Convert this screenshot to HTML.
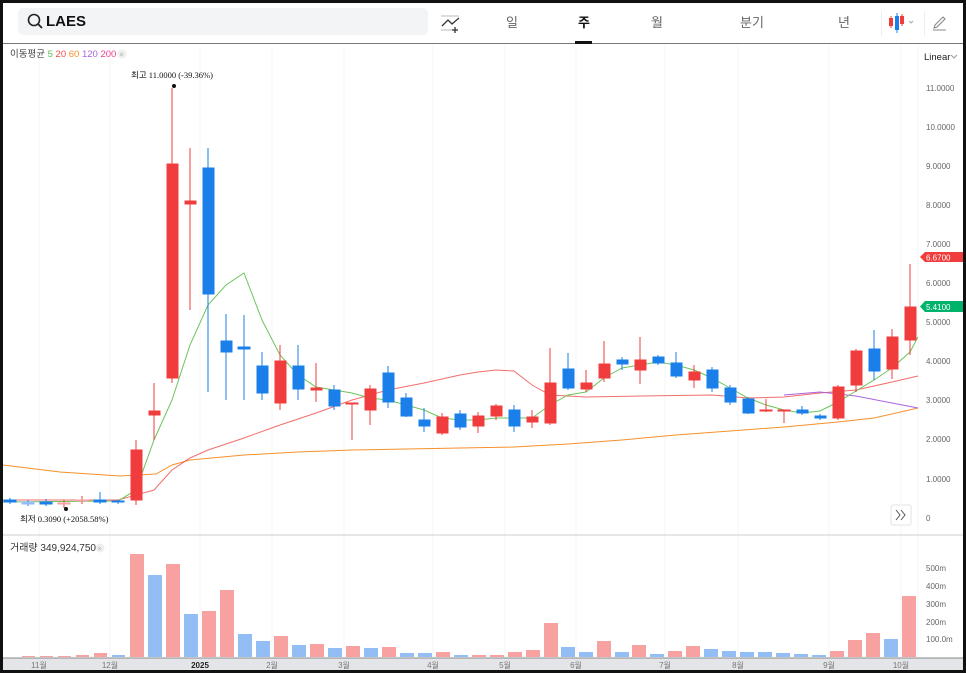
<!DOCTYPE html>
<html><head><meta charset="utf-8">
<style>
*{margin:0;padding:0;box-sizing:border-box}
html,body{width:966px;height:673px;overflow:hidden;background:#111}
body{font-family:"Liberation Sans","Noto Sans CJK KR",sans-serif;position:relative}
#page{position:absolute;left:3px;top:3px;width:960px;height:667px;background:#fff;overflow:hidden}
.top{position:absolute;left:0;top:0;width:960px;height:41px;border-bottom:1px solid #777}
.search{position:absolute;left:15px;top:5px;width:410px;height:27px;background:#f3f4f6;border-radius:5px}
.search span{position:absolute;left:28px;top:5px;font-weight:bold;font-size:15px;color:#111}
.tab{position:absolute;top:9px;font-size:13px;color:#666}
.sel{color:#111;font-weight:bold}
.t{font-family:"Liberation Sans","Noto Sans CJK KR",sans-serif}
</style></head><body><div id="page">
<div class="top">
 <div class="search"><svg width="20" height="20" style="position:absolute;left:8px;top:4px"><circle cx="8" cy="8" r="5.5" fill="none" stroke="#222" stroke-width="1.6"/><line x1="12" y1="12" x2="16" y2="16" stroke="#222" stroke-width="1.8"/></svg><span>LAES</span></div>
 <svg width="24" height="20" style="position:absolute;left:438px;top:11px"><line x1="0" y1="2" x2="18" y2="2" stroke="#bbb"/><polyline points="1,12 7,6 11,10 18,4" fill="none" stroke="#333" stroke-width="1.3"/><line x1="0" y1="16" x2="14" y2="16" stroke="#bbb"/><line x1="14" y1="13" x2="14" y2="19" stroke="#333" stroke-width="1.3"/><line x1="11" y1="16" x2="17" y2="16" stroke="#333" stroke-width="1.3"/></svg>
 <div class="tab" style="left:503px">일</div>
 <div class="tab sel" style="left:575px">주</div>
 <div class="tab" style="left:648px">월</div>
 <div class="tab" style="left:737px">분기</div>
 <div class="tab" style="left:835px">년</div>
 <div style="position:absolute;left:572px;top:38px;width:17px;height:3px;background:#111"></div>
 <div style="position:absolute;left:878px;top:8px;width:1px;height:25px;background:#eee"></div>
 <svg width="30" height="22" style="position:absolute;left:885px;top:9px"><line x1="3" y1="4" x2="3" y2="16" stroke="#f03c3c"/><rect x="1" y="6" width="4" height="8" fill="#f03c3c"/><line x1="9" y1="1" x2="9" y2="21" stroke="#1a7fe8"/><rect x="7" y="4" width="4" height="14" fill="#1a7fe8"/><line x1="14" y1="2" x2="14" y2="14" stroke="#f03c3c"/><rect x="12" y="4" width="4" height="8" fill="#f03c3c"/><polyline points="21,9 23,11 25,9" fill="none" stroke="#aaa"/></svg>
 <div style="position:absolute;left:921px;top:8px;width:1px;height:25px;background:#eee"></div>
 <svg width="16" height="16" style="position:absolute;left:929px;top:12px"><path d="M2 13 L3 10 L11 2 L13 4 L5 12 Z" fill="none" stroke="#888" stroke-width="1.1"/><line x1="1" y1="15" x2="14" y2="15" stroke="#888"/></svg>
</div>
<svg width="960" height="667" viewBox="3 3 960 667" style="position:absolute;left:0;top:0">
<g stroke="#f6f6f6" stroke-width="1">
<line x1="39" y1="45" x2="39" y2="657"/><line x1="110" y1="45" x2="110" y2="657"/><line x1="200" y1="45" x2="200" y2="657"/><line x1="272" y1="45" x2="272" y2="657"/><line x1="344" y1="45" x2="344" y2="657"/><line x1="433" y1="45" x2="433" y2="657"/><line x1="505" y1="45" x2="505" y2="657"/><line x1="576" y1="45" x2="576" y2="657"/><line x1="665" y1="45" x2="665" y2="657"/><line x1="738" y1="45" x2="738" y2="657"/><line x1="829" y1="45" x2="829" y2="657"/><line x1="901" y1="45" x2="901" y2="657"/>
<line x1="918" y1="45" x2="918" y2="657"/>
</g>
<line x1="3" y1="535" x2="963" y2="535" stroke="#ccc"/>
<text x="10" y="57" font-size="9.5" fill="#444" class="t">이동평균 <tspan fill="#5fbf4a">5</tspan> <tspan fill="#f04848">20</tspan> <tspan fill="#f5912b">60</tspan> <tspan fill="#a964e0">120</tspan> <tspan fill="#ee3e8a">200</tspan></text>
<circle cx="122" cy="54" r="4.5" fill="#eee"/><text x="119.5" y="57" font-size="7" fill="#aaa">×</text>
<text x="924" y="60" font-size="9.5" fill="#222" class="t">Linear</text><polyline points="951,55 954,58 957,55" fill="none" stroke="#999"/>
<g font-size="8" fill="#666" class="t">
<text x="926" y="91">11.0000</text><text x="926" y="130">10.0000</text><text x="926" y="169">9.0000</text><text x="926" y="208">8.0000</text><text x="926" y="247">7.0000</text><text x="926" y="286">6.0000</text><text x="926" y="325">5.0000</text><text x="926" y="364">4.0000</text><text x="926" y="403">3.0000</text><text x="926" y="442">2.0000</text><text x="926" y="482">1.0000</text><text x="926" y="521">0</text>
</g>
<path d="M925 252 H963 V262 H925 L920 257 Z" fill="#f03c3c"/><text x="926" y="260.5" font-size="8" fill="#fff">6.6700</text>
<path d="M925 301 H963 V312 H925 L920 306.5 Z" fill="#00b36b"/><text x="926" y="310" font-size="8" fill="#fff">5.4100</text>
<polyline fill="none" stroke="#f5912b" stroke-width="1" points="3,465 60,472 120,476 156,474 172,465 190,460 244,455 298,452 352,450 406,449 460,448 514,447 568,444 622,440 676,435 730,431 784,427 838,422 874,418 918,408"/>
<polyline fill="none" stroke="#f04848" stroke-width="1" opacity=".8" points="3,500 118,500 154,490 172,470 190,458 208,450 244,438 280,425 316,413 352,400 388,390 424,383 460,375 478,372 496,370 514,371 532,385 550,395 586,397 640,396 712,395 748,398 784,397 820,393 856,390 892,382 918,376"/>
<polyline fill="none" stroke="#a964e0" stroke-width="1" points="784,395 820,392 856,396 892,403 918,408"/>
<polyline fill="none" stroke="#6cc45a" stroke-width="1" points="3,502 118,501 136,490 154,440 172,400 190,345 208,305 226,285 244,273 262,320 280,355 298,375 316,387 334,390 352,393 370,398 388,400 406,405 424,410 442,418 460,420 478,420 496,418 514,418 532,418 550,405 568,395 586,392 604,378 622,368 640,365 658,362 676,365 694,370 712,378 730,388 748,398 766,405 784,410 802,413 820,411 838,402 856,391 874,380 892,368 910,352 918,337"/>
<g stroke-width="1">
<g stroke="#1a7fe8" fill="#1a7fe8">
<line x1="10" y1="498" x2="10" y2="504"/><rect x="4" y="500" width="12" height="2"/>
<line x1="28" y1="500" x2="28" y2="506"/><rect x="22" y="502" width="12" height="2" fill="#93bdf5" stroke="#93bdf5"/>
<line x1="46" y1="499" x2="46" y2="506"/><rect x="40" y="502" width="12" height="2"/>
<line x1="100" y1="492" x2="100" y2="504"/><rect x="94" y="500" width="12" height="2"/>
<line x1="118" y1="500" x2="118" y2="504"/><rect x="112" y="501" width="12" height="1"/>
<line x1="208" y1="148" x2="208" y2="392"/><rect x="203" y="168" width="11" height="126"/>
<line x1="226" y1="314" x2="226" y2="400"/><rect x="221" y="341" width="11" height="11"/>
<line x1="244" y1="315" x2="244" y2="400"/><rect x="238" y="347" width="12" height="2"/>
<line x1="262" y1="352" x2="262" y2="400"/><rect x="257" y="366" width="11" height="27"/>
<line x1="298" y1="345" x2="298" y2="400"/><rect x="293" y="366" width="11" height="23"/>
<line x1="334" y1="385" x2="334" y2="410"/><rect x="329" y="390" width="11" height="16"/>
<line x1="388" y1="366" x2="388" y2="408"/><rect x="383" y="373" width="11" height="29"/>
<line x1="406" y1="393" x2="406" y2="417"/><rect x="401" y="398" width="11" height="18"/>
<line x1="424" y1="408" x2="424" y2="432"/><rect x="419" y="420" width="11" height="6"/>
<line x1="460" y1="410" x2="460" y2="430"/><rect x="455" y="414" width="11" height="13"/>
<line x1="514" y1="405" x2="514" y2="432"/><rect x="509" y="410" width="11" height="16"/>
<line x1="568" y1="353" x2="568" y2="390"/><rect x="563" y="369" width="11" height="19"/>
<line x1="622" y1="357" x2="622" y2="370"/><rect x="617" y="360" width="11" height="4"/>
<line x1="658" y1="355" x2="658" y2="365"/><rect x="653" y="357" width="11" height="6"/>
<line x1="676" y1="352" x2="676" y2="378"/><rect x="671" y="363" width="11" height="13"/>
<line x1="712" y1="367" x2="712" y2="392"/><rect x="707" y="370" width="11" height="18"/>
<line x1="730" y1="385" x2="730" y2="405"/><rect x="725" y="388" width="11" height="14"/>
<line x1="748" y1="397" x2="748" y2="414"/><rect x="743" y="399" width="11" height="14"/>
<line x1="802" y1="406" x2="802" y2="415"/><rect x="797" y="410" width="11" height="3"/>
<line x1="820" y1="414" x2="820" y2="420"/><rect x="815" y="416" width="11" height="2"/>
<line x1="874" y1="330" x2="874" y2="380"/><rect x="869" y="349" width="11" height="22"/>
</g>
<g stroke="#f03c3c" fill="#f03c3c">
<line x1="64" y1="500" x2="64" y2="508"/><rect x="58" y="503" width="12" height="1" fill="#f7a1a1" stroke="#f7a1a1"/>
<line x1="82" y1="496" x2="82" y2="504"/><rect x="76" y="500" width="12" height="1" fill="#f7a1a1" stroke="#f7a1a1"/>
<line x1="136" y1="440" x2="136" y2="505"/><rect x="131" y="450" width="11" height="50"/>
<line x1="154" y1="383" x2="154" y2="440"/><rect x="149" y="411" width="11" height="4"/>
<line x1="172" y1="88" x2="172" y2="383"/><rect x="167" y="164" width="11" height="214"/>
<line x1="190" y1="148" x2="190" y2="310"/><rect x="185" y="201" width="11" height="3"/>
<line x1="280" y1="345" x2="280" y2="410"/><rect x="275" y="361" width="11" height="42"/>
<line x1="316" y1="363" x2="316" y2="402"/><rect x="311" y="388" width="11" height="2"/>
<line x1="352" y1="403" x2="352" y2="440"/><rect x="346" y="403" width="12" height="1"/>
<line x1="370" y1="385" x2="370" y2="425"/><rect x="365" y="389" width="11" height="21"/>
<line x1="442" y1="413" x2="442" y2="435"/><rect x="437" y="417" width="11" height="16"/>
<line x1="478" y1="412" x2="478" y2="433"/><rect x="473" y="416" width="11" height="10"/>
<line x1="496" y1="404" x2="496" y2="420"/><rect x="491" y="406" width="11" height="10"/>
<line x1="532" y1="410" x2="532" y2="428"/><rect x="527" y="417" width="11" height="5"/>
<line x1="550" y1="348" x2="550" y2="425"/><rect x="545" y="383" width="11" height="40"/>
<line x1="586" y1="370" x2="586" y2="392"/><rect x="581" y="383" width="11" height="6"/>
<line x1="604" y1="341" x2="604" y2="382"/><rect x="599" y="364" width="11" height="14"/>
<line x1="640" y1="337" x2="640" y2="384"/><rect x="635" y="360" width="11" height="10"/>
<line x1="694" y1="365" x2="694" y2="388"/><rect x="689" y="372" width="11" height="8"/>
<line x1="766" y1="399" x2="766" y2="412"/><rect x="760" y="410" width="12" height="1"/>
<line x1="784" y1="410" x2="784" y2="423"/><rect x="778" y="410" width="12" height="1"/>
<line x1="838" y1="385" x2="838" y2="420"/><rect x="833" y="387" width="11" height="31"/>
<line x1="856" y1="349" x2="856" y2="392"/><rect x="851" y="351" width="11" height="34"/>
<line x1="892" y1="329" x2="892" y2="379"/><rect x="887" y="337" width="11" height="32"/>
<line x1="910" y1="264" x2="910" y2="355"/><rect x="905" y="307" width="11" height="33"/>
</g>
</g>
<circle cx="174" cy="86" r="2" fill="#111"/>
<text x="131" y="78" font-size="8.5" fill="#111" font-family="Liberation Serif,'Noto Sans CJK KR',serif">최고  11.0000 (-39.36%)</text>
<circle cx="66" cy="509" r="2" fill="#111"/>
<text x="20" y="522" font-size="8.5" fill="#111" font-family="Liberation Serif,'Noto Sans CJK KR',serif">최저  0.3090 (+2058.58%)</text>
<rect x="891" y="505" width="20" height="20" rx="2" fill="#fff" stroke="#e3e3e3"/>
<polyline points="896,510 900,515 896,520" fill="none" stroke="#555"/><polyline points="901,510 905,515 901,520" fill="none" stroke="#555"/>
<text x="10" y="551" font-size="10" fill="#333" class="t">거래량 349,924,750</text>
<circle cx="100" cy="548" r="4.5" fill="#eee"/><text x="97.5" y="551" font-size="7" fill="#aaa">×</text>
<g font-size="8" fill="#666" class="t"><text x="926" y="571">500m</text><text x="926" y="589">400m</text><text x="926" y="607">300m</text><text x="926" y="625">200m</text><text x="926" y="642">100.0m</text></g>
<g fill="#f7a1a1">
<rect x="22" y="656" width="13" height="1"/><rect x="40" y="656" width="13" height="1"/><rect x="58" y="656" width="13" height="1"/><rect x="76" y="655" width="13" height="2"/><rect x="94" y="653" width="13" height="4"/>
<rect x="130" y="554" width="14" height="103"/><rect x="166" y="564" width="14" height="93"/><rect x="202" y="611" width="14" height="46"/><rect x="220" y="590" width="14" height="67"/><rect x="274" y="636" width="14" height="21"/><rect x="310" y="644" width="14" height="13"/><rect x="346" y="646" width="14" height="11"/><rect x="382" y="647" width="14" height="10"/><rect x="436" y="652" width="14" height="5"/><rect x="472" y="655" width="14" height="2"/><rect x="490" y="655" width="14" height="2"/><rect x="508" y="652" width="14" height="5"/><rect x="526" y="650" width="14" height="7"/><rect x="544" y="623" width="14" height="34"/><rect x="597" y="641" width="14" height="16"/><rect x="632" y="645" width="14" height="12"/><rect x="668" y="651" width="14" height="6"/><rect x="686" y="646" width="14" height="11"/><rect x="830" y="651" width="14" height="6"/><rect x="848" y="640" width="14" height="17"/><rect x="866" y="633" width="14" height="24"/><rect x="902" y="596" width="14" height="61"/>
</g>
<g fill="#93bdf5">
<rect x="112" y="655" width="13" height="2"/><rect x="148" y="575" width="14" height="82"/><rect x="184" y="614" width="14" height="43"/><rect x="238" y="634" width="14" height="23"/><rect x="256" y="641" width="14" height="16"/><rect x="292" y="645" width="14" height="12"/><rect x="328" y="648" width="14" height="9"/><rect x="364" y="648" width="14" height="9"/><rect x="400" y="653" width="14" height="4"/><rect x="418" y="653" width="14" height="4"/><rect x="454" y="655" width="14" height="2"/><rect x="561" y="647" width="14" height="10"/><rect x="579" y="652" width="14" height="5"/><rect x="615" y="652" width="14" height="5"/><rect x="650" y="654" width="14" height="3"/><rect x="704" y="649" width="14" height="8"/><rect x="722" y="651" width="14" height="6"/><rect x="740" y="652" width="14" height="5"/><rect x="758" y="652" width="14" height="5"/><rect x="776" y="653" width="14" height="4"/><rect x="794" y="654" width="14" height="3"/><rect x="812" y="655" width="14" height="2"/><rect x="884" y="639" width="14" height="18"/>
</g>
<rect x="3" y="658" width="960" height="12" fill="#e4e5e8"/>
<line x1="3" y1="658" x2="963" y2="658" stroke="#888"/>
<g font-size="8" fill="#777" class="t" text-anchor="middle"><text x="39" y="668">11월</text><text x="110" y="668">12월</text><text x="200" y="668" fill="#222" font-weight="bold">2025</text><text x="272" y="668">2월</text><text x="344" y="668">3월</text><text x="433" y="668">4월</text><text x="505" y="668">5월</text><text x="576" y="668">6월</text><text x="665" y="668">7월</text><text x="738" y="668">8월</text><text x="829" y="668">9월</text><text x="901" y="668">10월</text></g>
</svg>
</div></body></html>
